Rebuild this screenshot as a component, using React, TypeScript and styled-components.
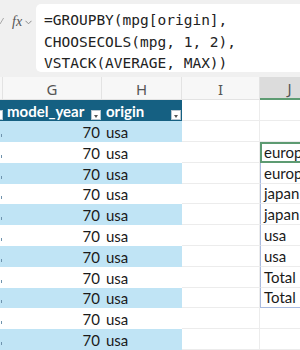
import React from "react";
import styled, { createGlobalStyle } from "styled-components";

const Global = createGlobalStyle`
  html, body { margin: 0; padding: 0; background: #ffffff; overflow: hidden; }
  body { font-family: Lato, "Noto Sans", sans-serif; }
`;

const Page = styled.div`
  width: 300px;
  height: 350px;
  overflow: hidden;
  display: flex;
  flex-direction: column;
`;

const FormulaBar = styled.div`
  height: 78px;
  background: #f0f0f0;
  display: flex;
  padding-top: 4px;
  box-sizing: border-box;
`;

const FxArea = styled.div`
  width: 36px;
  flex: none;
  display: flex;
  align-items: flex-start;
  padding-top: 10px;
  box-sizing: border-box;
  color: #6a6a6a;
  overflow: hidden;
`;

const Check = styled.svg`
  flex: none;
  margin-top: 3px;
`;

const Fx = styled.span`
  margin-left: 8px;
  font-family: "Liberation Serif", serif;
  font-style: italic;
  font-size: 14px;
  color: #555;
`;

const Chevron = styled.svg`
  margin-left: 3px;
  margin-top: 6px;
`;

const FormulaBox = styled.div`
  flex: 1;
  height: 68px;
  background: #ffffff;
  border-radius: 5px 0 0 5px;
  padding: 6px 0 0 8px;
  box-sizing: border-box;
  font-family: "DejaVu Sans Mono", monospace;
  font-size: 14.5px;
  line-height: 21.5px;
  color: #222;
  white-space: pre;
  overflow: hidden;
`;

const Grid = styled.div`
  display: grid;
  grid-template-columns: 3px 99px 80px 78px 60px;
  grid-auto-rows: 20.8px;
  grid-template-rows: 23px;
  font-size: 15px;
  color: #1a1a1a;
`;

const ColHead = styled.div<{ $sel?: boolean }>`
  background: ${(p) => (p.$sel ? "#dcdcdc" : "#f7f7f7")};
  border-right: 1px solid #e3e3e3;
  border-bottom: ${(p) => (p.$sel ? "2px solid #5d9b72" : "1px solid #e3e3e3")};
  box-sizing: border-box;
  display: flex;
  align-items: center;
  justify-content: center;
  font-family: "Noto Sans", sans-serif;
  font-size: 15px;
  color: #555;
  padding-top: 1px;
`;

const Cell = styled.div<{ $bg?: string; $align?: "left" | "right"; $head?: boolean; $grid?: boolean }>`
  background: ${(p) => p.$bg || "#ffffff"};
  box-sizing: border-box;
  display: flex;
  align-items: flex-end;
  justify-content: ${(p) => (p.$align === "right" ? "flex-end" : "flex-start")};
  padding: 0 ${(p) => (p.$align === "right" ? "2px" : "0")} 0 ${(p) => (p.$align === "right" ? "0" : "4px")};
  font-weight: ${(p) => (p.$head ? 700 : 400)};
  color: ${(p) => (p.$head ? "#ffffff" : "#1a1a1a")};
  border-bottom: ${(p) => (p.$grid ? "1px solid #ececec" : "none")};
  border-right: ${(p) => (p.$grid ? "1px solid #ececec" : "none")};
  position: relative;
  white-space: nowrap;
  overflow: hidden;
  line-height: 20px;
  min-width: 0;
`;

const EdgeCell = styled(Cell)`
  padding: 0;
  &::after {
    content: "";
    position: absolute;
    right: 1px;
    bottom: 5px;
    width: 1px;
    height: 3px;
    background: #6f93ad;
  }
`;

const SpillCell = styled(Cell)<{ $first?: boolean; $last?: boolean; $active?: boolean }>`
  border-left: 1px solid #a9bbe0;
  border-top: ${(p) => (p.$first ? "1px solid #a9bbe0" : "none")};
  border-bottom: ${(p) => (p.$last ? "1px solid #a9bbe0" : "1px solid #ececec")};
  padding-left: 3px;
  overflow: visible;
  &::after {
    content: "";
    display: ${(p) => (p.$active ? "block" : "none")};
    position: absolute;
    left: -1px;
    top: -1px;
    right: -2px;
    bottom: -1px;
    border: 2px solid #5d9b72;
  }
`;

const FilterBtn = styled.span`
  position: absolute;
  right: 1px;
  bottom: 1px;
  width: 10px;
  height: 10px;
  background: #ffffff;
  border: 1px solid #b9c7d0;
  box-sizing: border-box;
  display: flex;
  align-items: center;
  justify-content: center;
  &::before {
    content: "";
    border-left: 2.5px solid transparent;
    border-right: 2.5px solid transparent;
    border-top: 3px solid #555;
    margin-top: 2px;
  }
`;

const HEAD = "#156082";
const LIGHT = "#c0e4f5";

const jValues = ["europ", "europ", "japan", "japan", "usa", "usa", "Total", "Total"];

export default function App() {
  const rows = Array.from({ length: 11 }, (_, i) => i);
  return (
    <Page>
      <Global />
      <FormulaBar>
        <FxArea>
          <Check width="4" height="8" viewBox="0 0 4 8">
            <path d="M0 7 L3.6 1" fill="none" stroke="#a8a8a8" strokeWidth="1" />
          </Check>
          <Fx>fx</Fx>
          <Chevron width="7" height="5" viewBox="0 0 7 5">
            <path d="M0.5 0.8 L3.5 3.8 L6.5 0.8" fill="none" stroke="#8a8a8a" strokeWidth="1" />
          </Chevron>
        </FxArea>
        <FormulaBox>{"=GROUPBY(mpg[origin],\nCHOOSECOLS(mpg, 1, 2),\nVSTACK(AVERAGE, MAX))"}</FormulaBox>
      </FormulaBar>
      <Grid>
        <ColHead />
        <ColHead>G</ColHead>
        <ColHead>H</ColHead>
        <ColHead>I</ColHead>
        <ColHead $sel>J</ColHead>

        <Cell $bg={HEAD}>
          <FilterBtn />
        </Cell>
        <Cell $bg={HEAD} $head>
          model_year
          <FilterBtn />
        </Cell>
        <Cell $bg={HEAD} $head>
          origin
          <FilterBtn />
        </Cell>
        <Cell $grid />
        <Cell $grid />

        {rows.map((i) => {
          const bg = i % 2 === 0 ? LIGHT : "#ffffff";
          const inSpill = i >= 1 && i <= 8;
          return (
            <React.Fragment key={i}>
              <EdgeCell $bg={bg} />
              <Cell $bg={bg} $align="right">70</Cell>
              <Cell $bg={bg}>usa</Cell>
              <Cell $grid />
              {inSpill ? (
                <SpillCell $first={i === 1} $last={i === 8} $active={i === 1}>
                  {jValues[i - 1]}
                </SpillCell>
              ) : (
                <Cell $grid />
              )}
            </React.Fragment>
          );
        })}
      </Grid>
    </Page>
  );
}
